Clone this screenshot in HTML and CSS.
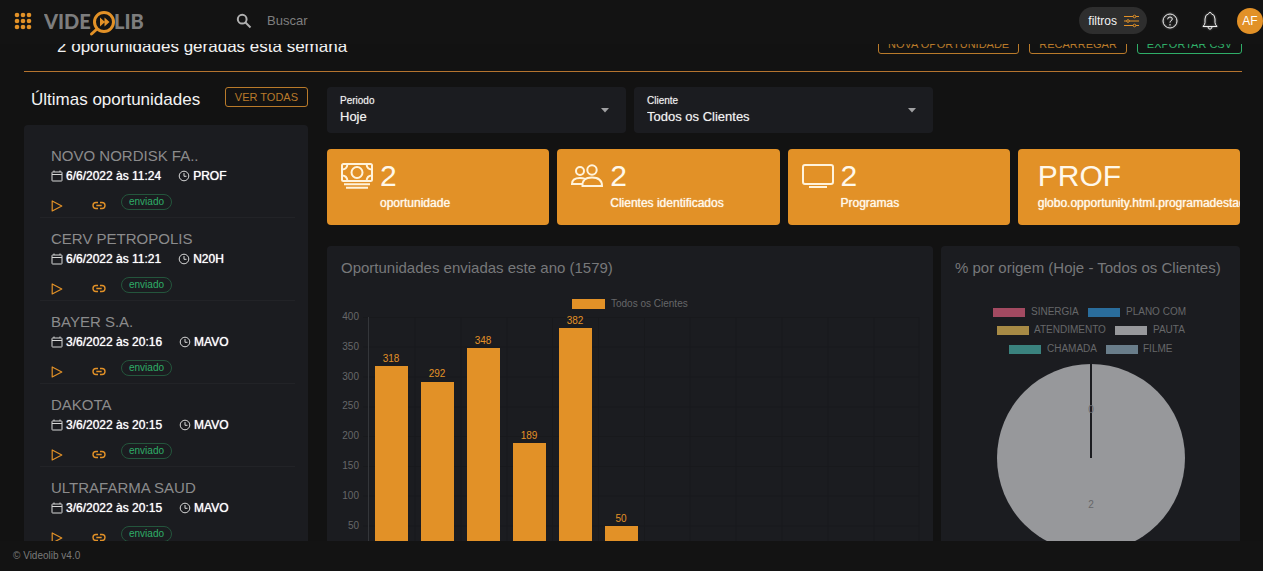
FILE: index.html
```html
<!DOCTYPE html>
<html lang="pt-BR">
<head>
<meta charset="utf-8">
<title>Videolib</title>
<meta name="viewport" content="width=device-width, initial-scale=1">
<link rel="stylesheet" href="styles.css">
</head>
<body>
<svg class="sprite" aria-hidden="true">
  <symbol id="calendar" viewBox="0 0 12 12"><path d="M1.500 2h9q.5 0 .5.5v8q0 .5-.5.5h-9q-.5 0-.5-.5v-8q0-.5.5-.5zM1 4.500h10M3 .5v1.500M9 .5v1.500"/></symbol>
  <symbol id="clock" viewBox="0 0 12 12"><circle cx="6" cy="6" r="4.800"/><path d="M6 3v3.300h2.500"/></symbol>
  <symbol id="play" viewBox="0 0 12 12"><path stroke-width="1.200" stroke-linejoin="round" d="M1.200 1v10L10.800 6z"/></symbol>
  <symbol id="link" viewBox="0 0 14 8"><path stroke-width="1.400" d="M6 1H4a3 3 0 0 0 0 6h2M8 1h2a3 3 0 0 1 0 6H8M4.300 4h5.400"/></symbol>
  <symbol id="caret" viewBox="0 0 10 5"><path d="M1 0h8L5 4.500z"/></symbol>
</svg>

<header class="topbar">
  <button class="icon-btn" aria-label="Menu">
    <svg class="apps" width="18" height="18" viewBox="0 0 18 18"><g id="dots"><circle cx="3" cy="3" r="2.300"/><circle cx="9" cy="3" r="2.300"/><circle cx="15" cy="3" r="2.300"/></g><use href="#dots" y="6"/><use href="#dots" y="12"/></svg>
  </button>
  <a class="logo" href="#" aria-label="Videolib">
    <svg width="104" height="30" viewBox="0 0 104 30">
      <text class="logo-text" x="0" y="22">VIDE</text>
      <text class="logo-text" x="70" y="22">LIB</text>
      <circle class="logo-ring" cx="60" cy="15" r="9.500"/>
      <path class="logo-handle" d="M53 22l-5.500 5"/>
      <path class="logo-play" d="M56 10.500l5 4.500-5 4.500zM60.500 10.500l5 4.500-5 4.500z"/>
    </svg>
  </a>
  <form class="search" role="search">
    <svg width="16" height="16" viewBox="0 0 16 16" aria-hidden="true"><circle cx="6.200" cy="6.200" r="4.400"/><path d="M9.500 9.500l5 5"/></svg>
    <input type="search" placeholder="Buscar" aria-label="Buscar">
  </form>
  <div class="tools">
    <button class="filters">filtros
      <svg width="15" height="14" viewBox="0 0 15 14" aria-hidden="true"><path d="M0 2.500h15M0 7h15M0 11.500h15"/><circle cx="10.500" cy="2.500" r="1.300"/><circle cx="4" cy="7" r="1.300"/><circle cx="10.500" cy="11.500" r="1.300"/></svg>
    </button>
    <button class="icon-btn" aria-label="Ajuda"><svg class="tool" width="18" height="18" viewBox="0 0 18 18"><circle cx="9" cy="9" r="7"/><path d="M6.700 7.300q0-2.300 2.300-2.300t2.300 2q0 1-1.200 1.700T9 10.600M9 12v1.500"/></svg></button>
    <button class="icon-btn" aria-label="Notificações"><svg class="tool" width="18" height="20" viewBox="0 0 18 20"><path d="M2 15.500q2-2 2-4V8q0-4.500 3.700-5.300Q8 1.300 9 1.300t1.300 1.400Q14 3.500 14 8v3.500q0 2 2 4zM7 16q.4 2.200 2 2.200t2-2.200"/></svg></button>
    <button class="avatar">AF</button>
  </div>
</header>

<main class="page">
  <section class="summary">
    <h1>2 oportunidades geradas esta semana</h1>
    <div class="summary-actions">
      <button class="outline">NOVA OPORTUNIDADE</button>
      <button class="outline">RECARREGAR</button>
      <button class="outline green">EXPORTAR CSV</button>
    </div>
  </section>

  <div class="columns">
    <aside class="latest">
      <div class="latest-head">
        <h2>Últimas oportunidades</h2>
        <button class="outline">VER TODAS</button>
      </div>
      <ul class="list">
        <li>
          <h3>NOVO NORDISK FA..</h3>
          <p class="meta"><svg><use href="#calendar"/></svg><span>6/6/2022 às 11:24</span><svg><use href="#clock"/></svg><span>PROF</span></p>
          <div class="actions"><button aria-label="Reproduzir"><svg class="play"><use href="#play"/></svg></button><button aria-label="Link"><svg class="link"><use href="#link"/></svg></button><span class="tag">enviado</span></div>
        </li>
        <li>
          <h3>CERV PETROPOLIS</h3>
          <p class="meta"><svg><use href="#calendar"/></svg><span>6/6/2022 às 11:21</span><svg><use href="#clock"/></svg><span>N20H</span></p>
          <div class="actions"><button aria-label="Reproduzir"><svg class="play"><use href="#play"/></svg></button><button aria-label="Link"><svg class="link"><use href="#link"/></svg></button><span class="tag">enviado</span></div>
        </li>
        <li>
          <h3>BAYER S.A.</h3>
          <p class="meta"><svg><use href="#calendar"/></svg><span>3/6/2022 às 20:16</span><svg><use href="#clock"/></svg><span>MAVO</span></p>
          <div class="actions"><button aria-label="Reproduzir"><svg class="play"><use href="#play"/></svg></button><button aria-label="Link"><svg class="link"><use href="#link"/></svg></button><span class="tag">enviado</span></div>
        </li>
        <li>
          <h3>DAKOTA</h3>
          <p class="meta"><svg><use href="#calendar"/></svg><span>3/6/2022 às 20:15</span><svg><use href="#clock"/></svg><span>MAVO</span></p>
          <div class="actions"><button aria-label="Reproduzir"><svg class="play"><use href="#play"/></svg></button><button aria-label="Link"><svg class="link"><use href="#link"/></svg></button><span class="tag">enviado</span></div>
        </li>
        <li>
          <h3>ULTRAFARMA SAUD</h3>
          <p class="meta"><svg><use href="#calendar"/></svg><span>3/6/2022 às 20:15</span><svg><use href="#clock"/></svg><span>MAVO</span></p>
          <div class="actions"><button aria-label="Reproduzir"><svg class="play"><use href="#play"/></svg></button><button aria-label="Link"><svg class="link"><use href="#link"/></svg></button><span class="tag">enviado</span></div>
        </li>
      </ul>
    </aside>

    <div class="dashboard">
      <div class="row thirds">
        <div class="field">
          <div class="field-body"><label for="periodo">Periodo</label><select id="periodo"><option>Hoje</option></select></div>
          <svg><use href="#caret"/></svg>
        </div>
        <div class="field">
          <div class="field-body"><label for="cliente">Cliente</label><select id="cliente"><option>Todos os Clientes</option></select></div>
          <svg><use href="#caret"/></svg>
        </div>
      </div>

      <div class="row quarters">
        <div class="stat">
          <svg width="32" height="28" viewBox="0 0 32 28"><rect x="1" y="2" width="30" height="17" rx="1.500"/><circle cx="16" cy="10.500" r="5.500"/><path d="M1 7.500q5 0 5.500-5.500M31 7.500q-5 0-5.500-5.500M1 13.500q5 0 5.500 5.500M31 13.500q-5 0-5.500 5.500M3 22.300h26M5 25.700h22"/></svg>
          <div><strong>2</strong><span>oportunidade</span></div>
        </div>
        <div class="stat">
          <svg width="32" height="28" viewBox="0 0 32 28"><circle cx="9" cy="9" r="4"/><circle cx="21" cy="8" r="4.700"/><path d="M11.500 24q-.5-8.500 9.500-8.500T31 24zM12 22H1q0-6 8-6 3 0 5 1"/></svg>
          <div><strong>2</strong><span>Clientes identificados</span></div>
        </div>
        <div class="stat">
          <svg width="32" height="28" viewBox="0 0 32 28"><rect x="1" y="3" width="30" height="19" rx="2"/><path d="M7 25h18"/></svg>
          <div><strong>2</strong><span>Programas</span></div>
        </div>
        <div class="stat plain">
          <div><strong>PROF</strong><span>globo.opportunity.html.programadestaque</span></div>
        </div>
      </div>

      <div class="row thirds charts">
        <section class="panel wide">
          <h2>Oportunidades enviadas este ano (1579)</h2>
          <svg class="chart" viewBox="0 0 606 300" role="img" aria-label="Oportunidades enviadas por mês">
            <path class="grid" d="M36 40.500H592M36 70H592M36 100H592M36 130H592M36 159.500H592M36 189.500H592M36 219H592M36 249H592M88 40V278M134 40V278M180 40V278M225.500 40V278M271.500 40V278M317.500 40V278M363 40V278M409 40V278M455 40V278M501 40V278M547 40V278M592 40V278"/>
            <path class="axis" d="M41.500 40V278"/>
            <g class="bars">
              <rect x="245" y="22" width="33" height="10"/>
              <rect x="48" y="89" width="33" height="189"/>
              <rect x="94" y="105" width="33" height="173"/>
              <rect x="140" y="71" width="33" height="207"/>
              <rect x="186" y="166" width="33" height="112"/>
              <rect x="232" y="51" width="33" height="227"/>
              <rect x="278" y="249" width="33" height="29"/>
            </g>
            <text x="284" y="30">Todos os Cientes</text>
            <g text-anchor="end">
              <text x="32" y="43">400</text><text x="32" y="73">350</text><text x="32" y="103">300</text><text x="32" y="132">250</text><text x="32" y="162">200</text><text x="32" y="192">150</text><text x="32" y="222">100</text><text x="32" y="252">50</text>
            </g>
            <g class="values" text-anchor="middle">
              <text x="64" y="85">318</text><text x="110" y="100">292</text><text x="156" y="67">348</text><text x="202" y="162">189</text><text x="248" y="47">382</text><text x="294" y="245">50</text>
            </g>
          </svg>
        </section>
        <section class="panel">
          <h2>% por origem (Hoje - Todos os Clientes)</h2>
          <svg class="chart" viewBox="0 0 299 300" role="img" aria-label="Percentual por origem">
            <rect x="52" y="31" width="32" height="9" fill="#a34a61"/><text x="90" y="38">SINERGIA</text>
            <rect x="147" y="31" width="32" height="9" fill="#2a6d9c"/><text x="185" y="38">PLANO COM</text>
            <rect x="56" y="49" width="32" height="9" fill="#a78a45"/><text x="93" y="56">ATENDIMENTO</text>
            <rect x="174" y="49" width="32" height="9" fill="#97989b"/><text x="212" y="56">PAUTA</text>
            <rect x="68" y="68" width="32" height="9" fill="#3a827e"/><text x="106" y="75">CHAMADA</text>
            <rect x="165" y="68" width="32" height="9" fill="#697d8a"/><text x="202" y="75">FILME</text>
            <circle cx="150" cy="181" r="94" fill="#97989b"/>
            <path class="slice" d="M150 87V181"/>
            <g text-anchor="middle"><text x="150" y="136">0</text><text x="150" y="231">2</text></g>
          </svg>
        </section>
      </div>
    </div>
  </div>
</main>

<footer class="footer">© Videolib v4.0</footer>
</body>
</html>
```
FILE: styles.css
```css
* { box-sizing: border-box; margin: 0; padding: 0; }

:root {
  --bg: #121212;
  --panel: #1b1c20;
  --orange: #e29127;
  --orange-line: #b97a2a;
  --green: #2fae68;
  --muted: #8b8b8c;
}

html, body { height: 100%; }

body {
  display: flex;
  flex-direction: column;
  overflow: hidden;
  background: var(--bg);
  color: #f2f2f2;
  font-family: "Liberation Sans", Arial, sans-serif;
  font-size: 12px;
}

button, input, select { font: inherit; color: inherit; background: none; border: 0; }
button { cursor: pointer; }
h1, h2, h3 { font-weight: 400; }
svg { display: block; flex: none; fill: none; }
.sprite { width: 0; height: 0; position: absolute; }

/* Top bar */
.topbar {
  flex: none;
  display: flex;
  align-items: center;
  height: 44px;
  padding: 0 0 3px 14px;
  background: #131313;
}
.icon-btn { display: flex; }
.apps { fill: var(--orange); }
.logo { margin-left: 12px; padding-top: 3px; }
.logo-text { font: 900 20px Lato, sans-serif; fill: #7d7d7d; }
.logo-ring { fill: #131313; stroke: var(--orange); stroke-width: 3; }
.logo-handle { stroke: var(--orange); stroke-width: 3; stroke-linecap: round; }
.logo-play { fill: var(--orange); }
.search {
  flex: 1;
  display: flex;
  align-items: center;
  gap: 15px;
  margin-left: 71px;
  padding-left: 17px;
}
.search svg { stroke: #b0b0b0; stroke-width: 2; }
.search input { flex: 1; min-width: 0; font-size: 13px; outline: 0; }
.search input::placeholder { color: #7f7f7f; opacity: 1; }
.tools { display: flex; align-items: center; gap: 14px; }
.tools .icon-btn { padding: 0 4px; }
.tool { stroke: #f0f0f0; stroke-width: 1; stroke-linejoin: round; filter: drop-shadow(0 0 1px #888); }
.filters {
  display: flex;
  align-items: center;
  gap: 7px;
  height: 27px;
  padding: 0 8px 0 9px;
  margin-right: -4px;
  border-radius: 14px;
  background: #2e2e2e;
}
.filters svg { stroke: var(--orange); fill: #2e2e2e; }
.avatar {
  width: 26px;
  height: 26px;
  border-radius: 50%;
  background: var(--orange);
  color: #fff;
}

/* Page */
.page { flex: 1; min-height: 0; overflow: hidden; }
.summary {
  display: flex;
  justify-content: space-between;
  align-items: flex-end;
  height: 28px;
  margin: 0 21px 0 24px;
  padding: 0 0 17px 33px;
  border-bottom: 1px solid #b5742f;
}
.summary h1 { font-size: 17px; line-height: 14px; }
.summary-actions { display: flex; gap: 10px; }
.outline {
  height: 20px;
  padding: 0 9px;
  border: 1px solid var(--orange-line);
  border-radius: 3px;
  color: var(--orange-line);
  font-size: 11px;
  white-space: nowrap;
}
.green { color: var(--green); border-color: var(--green); }

.columns {
  display: grid;
  grid-template-columns: 284px minmax(0, 1fr);
  gap: 19px;
  padding: 15px 23px 0 24px;
}

/* Latest opportunities */
.latest-head {
  display: flex;
  justify-content: space-between;
  align-items: flex-start;
  padding-left: 7px;
  margin-bottom: 12px;
}
.latest-head h2 { font-size: 17px; line-height: 26px; }
.list {
  list-style: none;
  padding: 10px 13px 0 16px;
  background: var(--panel);
  border-radius: 4px 4px 0 0;
}
.list li { height: 83px; padding: 12px 0 0 11px; border-bottom: 1px solid #222327; }
.list h3 { font-size: 15px; line-height: 18px; color: var(--muted); }
.meta { display: flex; align-items: center; margin-top: 3px; line-height: 16px; color: #fff; text-shadow: 0 0 1px #fff; }
.meta svg { width: 12px; height: 12px; margin-right: 3px; stroke: #d8d8d8; }
.meta span { margin-right: 17px; }
.actions { display: flex; align-items: flex-start; margin-top: 10px; }
.actions button { padding-top: 6px; }
.play { width: 12px; height: 12px; stroke: var(--orange); }
.link { width: 14px; height: 11px; margin: 0 15px 0 29px; stroke: var(--orange); }
.tag {
  padding: 0 7px;
  border: 1px solid #24553c;
  border-radius: 9px;
  color: var(--green);
  font-size: 10px;
  line-height: 14px;
}

/* Dashboard */
.row { display: grid; gap: 8px; }
.thirds { grid-template-columns: repeat(3, minmax(0, 1fr)); }
.quarters { grid-template-columns: repeat(4, minmax(0, 1fr)); margin: 16px 0 21px; }
.field {
  display: flex;
  align-items: center;
  padding: 7px 16px 7px 13px;
  background: var(--panel);
  border-radius: 4px;
}
.field-body { flex: 1; display: flex; flex-direction: column; text-shadow: 0 0 1px #888; }
.field label { font-size: 10px; line-height: 14px; }
.field select { appearance: none; font-size: 13px; line-height: 18px; outline: 0; text-shadow: inherit; }
.field option { background: var(--panel); }
.field svg { width: 10px; height: 5px; fill: #a0a0a2; }

.stat {
  display: flex;
  align-items: flex-start;
  gap: 7px;
  height: 76px;
  padding: 10px 0 0 14px;
  overflow: hidden;
  border-radius: 4px;
  background: var(--orange);
  color: #fff8ea;
  white-space: nowrap;
}
.plain { padding-left: 20px; }
.stat svg { margin-top: 3px; stroke: #fff3dc; stroke-width: 2; }
.stat strong { display: block; font-size: 30px; line-height: 34px; font-weight: 400; }
.stat span { display: block; line-height: 20px; text-shadow: 0 0 1px #fff8ea; }

.panel { padding-top: 13px; background: var(--panel); border-radius: 4px; }
.wide { grid-column: span 2; }
.panel h2 { padding-left: 14px; font-size: 15px; line-height: 18px; color: #77787a; white-space: nowrap; }
.chart { width: 100%; height: auto; }
.chart text { font-size: 10px; fill: #666769; }
.chart .values text { fill: var(--orange); }
.bars { fill: var(--orange); }
.grid { stroke: #18191c; }
.axis { stroke: #34363a; }
.slice { stroke: #1b1c20; stroke-width: 2; }

.footer {
  flex: none;
  height: 30px;
  padding-left: 13px;
  background: #131313;
  color: #7a7a7a;
  font-size: 10px;
  line-height: 30px;
}
```
